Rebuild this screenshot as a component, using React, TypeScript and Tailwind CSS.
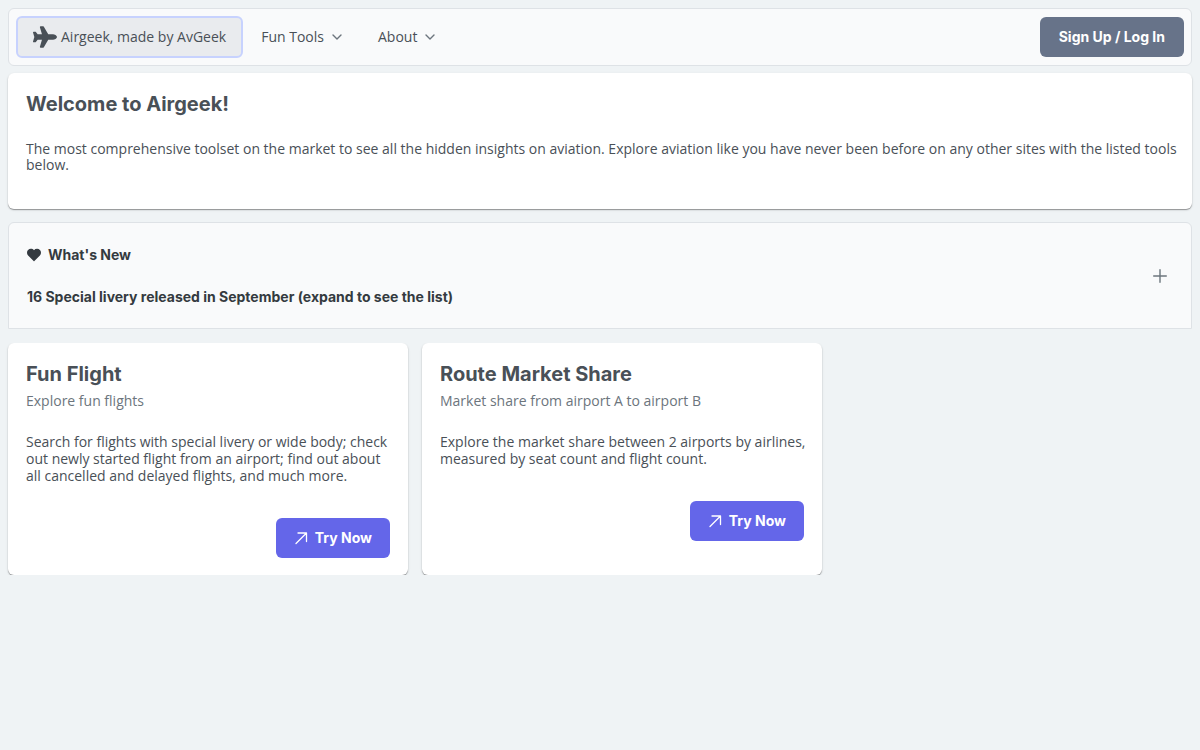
import type { ReactNode } from 'react'
import { FaPlane } from 'react-icons/fa'

interface Tool {
  title: string
  subtitle: string
  description: string
}

const TOOLS: Tool[] = [
  {
    title: 'Fun Flight',
    subtitle: 'Explore fun flights',
    description:
      'Search for flights with special livery or wide body; check out newly started flight from an airport; find out about all cancelled and delayed flights, and much more.',
  },
  {
    title: 'Route Market Share',
    subtitle: 'Market share from airport A to airport B',
    description:
      'Explore the market share between 2 airports by airlines, measured by seat count and flight count.',
  },
]

export default function App() {
  return (
    <div className="min-h-screen bg-[#eff3f5] p-2 font-['Open_Sans',sans-serif] text-sm text-[#495057]">
      <NavBar />

      <main>
        <Card className="mt-[7px] pb-9">
          <h1 className="font-['Inter',sans-serif] text-xl leading-[26px] font-bold">
            Welcome to Airgeek!
          </h1>
          <p className="mt-6 -mr-2 leading-4">
            The most comprehensive toolset on the market to see all the hidden insights on aviation.
            Explore aviation like you have never been before on any other sites with the listed tools
            below.
          </p>
        </Card>

        <WhatsNew />

        {/* clips the cards' bottom shadow */}
        <div className="mt-3.5 flex flex-wrap gap-3.5 overflow-y-clip">
          {TOOLS.map((tool) => (
            <ToolCard key={tool.title} tool={tool} />
          ))}
        </div>
      </main>
    </div>
  )
}

function NavBar() {
  return (
    <nav className="flex items-center justify-between rounded-md border border-[#dee2e6] bg-[#f9fafb] p-[7px]">
      <div className="flex items-center">
        <a
          href="#"
          className="flex h-[42px] items-center gap-1 rounded-md border-2 border-[#c7d2fe] bg-[#e9ebee] px-[15px]"
        >
          <FaPlane className="size-6" />
          Airgeek, made by AvGeek
        </a>
        <NavMenu label="Fun Tools" />
        <NavMenu label="About" />
      </div>
      <button
        type="button"
        className="h-10 rounded-md bg-[#677389] px-[19px] font-['Inter',sans-serif] font-bold text-white"
      >
        Sign Up / Log In
      </button>
    </nav>
  )
}

function NavMenu({ label }: { label: string }) {
  return (
    <button type="button" className="flex h-[42px] items-center gap-2 px-[18px]">
      {label}
      <svg viewBox="0 0 10 10" className="size-2.5" fill="none" stroke="#6c757d" strokeWidth="1.4">
        <path d="M1 3l4 4 4-4" strokeLinecap="round" strokeLinejoin="round" />
      </svg>
    </button>
  )
}

function Card({ className, children }: { className: string; children: ReactNode }) {
  return (
    <section
      className={`rounded-md bg-white px-[18px] pt-[18px] shadow-[0_1px_1px_0_rgba(0,0,0,0.35),0_1px_3px_0_rgba(0,0,0,0.1)] ${className}`}
    >
      {children}
    </section>
  )
}

function WhatsNew() {
  return (
    <section className="mt-[13px] flex items-center justify-between rounded-t-md border border-[#dee2e6] bg-[#f9fafb] py-[23px] pr-6 pl-[18px] font-['Inter',sans-serif] font-bold text-[#343a40]">
      <div>
        <h2 className="flex items-center gap-[7px] leading-[17px]">
          <svg viewBox="0 0 14 14" className="size-3.5" fill="currentColor">
            <path d="M7 13.2a.6.6 0 0 1-.4-.2L1.1 7.4A3.8 3.8 0 0 1 0 4.7C0 2.5 1.7.8 3.8.8 5 .8 6.2 1.3 7 2.200A4 4 0 0 1 10.2.8C12.3.8 14 2.500 14 4.700c0 1-.4 2-1.1 2.700L7.400 13a.6.6 0 0 1-.4.2z" />
          </svg>
          What's New
        </h2>
        <p className="mt-[25px] leading-[17px]">
          16 Special livery released in September (expand to see the list)
        </p>
      </div>
      <button type="button" aria-label="Expand" className="text-[#6c757d]">
        <svg viewBox="0 0 14 14" className="size-3.5" stroke="currentColor" strokeWidth="1.4">
          <path d="M7 .7v12.600M.7 7h12.600" strokeLinecap="round" />
        </svg>
      </button>
    </section>
  )
}

function ToolCard({ tool }: { tool: Tool }) {
  return (
    <Card className="w-full max-w-[400px] pb-[17px]">
      <h2 className="font-['Inter',sans-serif] text-xl leading-[26px] font-bold">{tool.title}</h2>
      <p className="mt-[5px] leading-[17px] text-[#6c757d]">{tool.subtitle}</p>
      <p className="mt-6 -mr-2 leading-[17px]">{tool.description}</p>
      <div className="mt-[34px] flex justify-end">
        <button
          type="button"
          className="flex h-10 items-center gap-[7px] rounded-md bg-[#6466e9] px-[18px] font-['Inter',sans-serif] font-bold text-white"
        >
          <svg viewBox="0 0 14 14" className="size-3.5" fill="none" stroke="currentColor" strokeWidth="1.3">
            <path d="M2 12.500L12.500 2M4 2h8.500v8.500" strokeLinecap="round" strokeLinejoin="round" />
          </svg>
          Try Now
        </button>
      </div>
    </Card>
  )
}
